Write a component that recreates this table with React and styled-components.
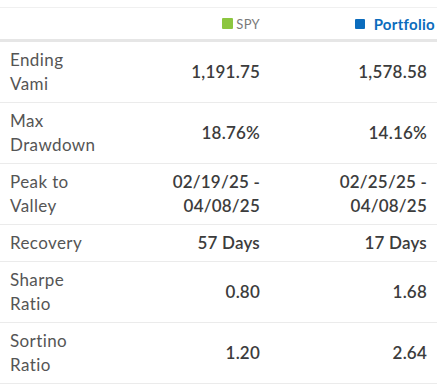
import React from 'react';
import styled, { createGlobalStyle } from 'styled-components';

const rows = [
  { label: 'Ending Vami', spy: '1,191.75', portfolio: '1,578.58' },
  { label: 'Max Drawdown', spy: '18.76%', portfolio: '14.16%' },
  { label: 'Peak to Valley', spy: ['02/19/25 -', '04/08/25'], portfolio: ['02/25/25 -', '04/08/25'] },
  { label: 'Recovery', spy: '57 Days', portfolio: '17 Days' },
  { label: 'Sharpe Ratio', spy: '0.80', portfolio: '1.68' },
  { label: 'Sortino Ratio', spy: '1.20', portfolio: '2.64' },
];

const GlobalStyle = createGlobalStyle`
  body {
    margin: 0;
    background: #ffffff;
    font-family: Lato, "Open Sans", sans-serif;
  }
`;

const Table = styled.div`
  width: 437px;
  margin-top: 7px;
  border-top: 1px solid #f0f0f0;
  display: grid;
  grid-template-columns: 110px 160px 167px;
`;

const HeadCell = styled.div`
  height: 31px;
  display: flex;
  align-items: center;
  justify-content: flex-end;
  padding-right: ${(p) => (p.$last ? '2px' : '10px')};
  border-bottom: 3px solid #e6e6e6;
  font-size: ${(p) => (p.$strong ? '15px' : '13px')};
  font-weight: ${(p) => (p.$strong ? 700 : 400)};
  letter-spacing: 0.3px;
  color: ${(p) => p.$color || '#7a7a7a'};
`;

const Swatch = styled.span`
  display: inline-block;
  width: ${(p) => p.$size}px;
  height: ${(p) => p.$size}px;
  border-radius: 1px;
  background: ${(p) => p.$color};
  margin-right: ${(p) => p.$gap}px;
`;

const Cell = styled.div`
  padding: 6px 10px;
  border-bottom: 1px solid #ebebeb;
  display: flex;
  flex-direction: column;
  justify-content: center;
  font-size: 17px;
  letter-spacing: 0.4px;
  line-height: 24px;
  min-height: 24px;
`;

const Label = styled(Cell)`
  color: #555555;
`;

const Value = styled(Cell)`
  align-items: flex-end;
  text-align: right;
  color: #3c3c3c;
  font-weight: 600;
  letter-spacing: 0.2px;
`;

const renderValue = (v) =>
  Array.isArray(v) ? v.map((line) => <span key={line}>{line}</span>) : v;

export default function App() {
  return (
    <>
      <GlobalStyle />
      <Table>
        <HeadCell />
        <HeadCell>
          <Swatch $size={11} $color="#8cc63f" $gap={3} />
          SPY
        </HeadCell>
        <HeadCell $strong $last $color="#0b6cbd">
          <Swatch $size={10} $color="#0b6cbd" $gap={9} />
          Portfolio
        </HeadCell>
        {rows.map((r) => (
          <React.Fragment key={r.label}>
            <Label>{r.label}</Label>
            <Value>{renderValue(r.spy)}</Value>
            <Value>{renderValue(r.portfolio)}</Value>
          </React.Fragment>
        ))}
      </Table>
    </>
  );
}
